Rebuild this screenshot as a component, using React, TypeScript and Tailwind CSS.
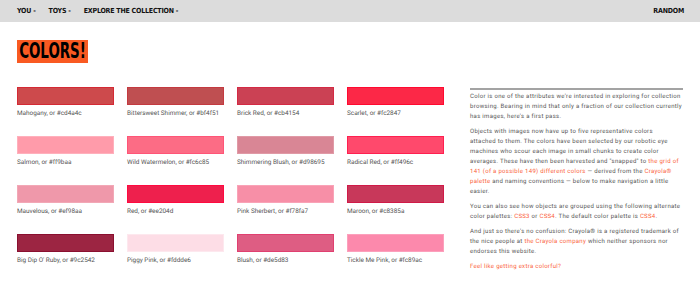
import React from 'react';

interface Swatch {
  name: string;
  hex: string;
  fill: string;
  edge: string;
}

const swatches: Swatch[] = [
  { name: 'Mahogany', hex: '#cd4a4c', fill: 'bg-[#cd4a4c]', edge: 'border-[#d42a34]' },
  { name: 'Bittersweet Shimmer', hex: '#bf4f51', fill: 'bg-[#bf4f51]', edge: 'border-[#c43a40]' },
  { name: 'Brick Red', hex: '#cb4154', fill: 'bg-[#cb4154]', edge: 'border-[#d42a44]' },
  { name: 'Scarlet', hex: '#fc2847', fill: 'bg-[#fc2847]', edge: 'border-[#ff0a30]' },
  { name: 'Salmon', hex: '#ff9baa', fill: 'bg-[#ff9baa]', edge: 'border-[#ffb0bc]' },
  { name: 'Wild Watermelon', hex: '#fc6c85', fill: 'bg-[#fc6c85]', edge: 'border-[#ff5577]' },
  { name: 'Shimmering Blush', hex: '#d98695', fill: 'bg-[#d98695]', edge: 'border-[#e09aa6]' },
  { name: 'Radical Red', hex: '#ff496c', fill: 'bg-[#ff496c]', edge: 'border-[#ff2050]' },
  { name: 'Mauvelous', hex: '#ef98aa', fill: 'bg-[#ef98aa]', edge: 'border-[#f2a8b6]' },
  { name: 'Red', hex: '#ee204d', fill: 'bg-[#ee204d]', edge: 'border-[#ff0a40]' },
  { name: 'Pink Sherbert', hex: '#f78fa7', fill: 'bg-[#f78fa7]', edge: 'border-[#f9a3b7]' },
  { name: 'Maroon', hex: '#c8385a', fill: 'bg-[#c8385a]', edge: 'border-[#d01a48]' },
  { name: "Big Dip O' Ruby", hex: '#9c2542', fill: 'bg-[#9c2542]', edge: 'border-[#8a1030]' },
  { name: 'Piggy Pink', hex: '#fddde6', fill: 'bg-[#fddde6]', edge: 'border-[#fde8ee]' },
  { name: 'Blush', hex: '#de5d83', fill: 'bg-[#de5d83]', edge: 'border-[#e04070]' },
  { name: 'Tickle Me Pink', hex: '#fc89ac', fill: 'bg-[#fc89ac]', edge: 'border-[#fca0bc]' },
];

const condensed = "font-['DejaVu_Sans_Condensed','DejaVu_Sans',sans-serif]";
const body = "font-['Roboto','Liberation_Sans',sans-serif] [text-rendering:geometricPrecision]";

function Link({ children }: { children: React.ReactNode }) {
  return <a className="text-[#fa5f3c] cursor-pointer">{children}</a>;
}

export default function App() {
  return (
    <div className="w-[700px] h-[282px] overflow-hidden bg-white">
      {/* Top nav */}
      <nav className={`h-[22px] bg-[#dcdcdc] flex items-center justify-between pl-[17px] pr-[16px] text-[7px] tracking-[-0.2px] font-bold text-[#111] ${condensed}`}>
        <div className="flex items-center gap-[13px]">
          <span>YOU -</span>
          <span>TOYS -</span>
          <span>EXPLORE THE COLLECTION -</span>
        </div>
        <span>RANDOM</span>
      </nav>

      <div className="px-[17px]">
        {/* Title */}
        <div className="mt-[18px] flex">
          <h1 className={`w-[71px] h-[23px] bg-[#f95a22] text-black text-[21px] leading-[23px] font-bold overflow-hidden ${condensed}`}>
            <span className="inline-block pl-[3px] origin-left scale-x-[0.71]">COLORS!</span>
          </h1>
        </div>

        <div className="mt-[24px] flex items-start gap-[26px]">
          {/* Swatch grid */}
          <div className="grid grid-cols-4 gap-x-[13px] gap-y-[19px] w-[427px] shrink-0">
            {swatches.map((s) => (
              <div key={s.hex}>
                <div className={`h-[18px] border ${s.fill} ${s.edge}`} />
                <div className={`mt-[4px] text-[6.4px] leading-[8px] whitespace-nowrap text-[#555] ${body}`}>
                  {s.name}, or {s.hex}
                </div>
              </div>
            ))}
          </div>

          {/* Description */}
          <div className={`w-[216px] mt-[1px] border-t-2 border-[#a3a3a3] pt-[2px] text-[6px] tracking-[0.3px] leading-[10px] text-[#555] flex flex-col gap-[5px] ${body}`}>
            <p>
              Color is one of the attributes we're interested in exploring for collection
              <br />
              browsing. Bearing in mind that only a fraction of our collection currently
              <br />
              has images, here's a first pass.
            </p>
            <p>
              Objects with images now have up to five representative colors
              <br />
              attached to them. The colors have been selected by our robotic eye
              <br />
              machines who scour each image in small chunks to create color
              <br />
              averages. These have then been harvested and "snapped" to <Link>the grid of</Link>
              <br />
              <Link>141 (of a possible 149) different colors</Link> — derived from the <Link>Crayola®</Link>
              <br />
              <Link>palette</Link> and naming conventions — below to make navigation a little
              <br />
              easier.
            </p>
            <p>
              You can also see how objects are grouped using the following alternate
              <br />
              color palettes: <Link>CSS3</Link> or <Link>CSS4</Link>. The default color palette is <Link>CSS4</Link>.
            </p>
            <p>
              And just so there's no confusion: Crayola® is a registered trademark of
              <br />
              the nice people at <Link>the Crayola company</Link> which neither sponsors nor
              <br />
              endorses this website.
            </p>
            <p>
              <Link>Feel like getting extra colorful?</Link>
            </p>
          </div>
        </div>
      </div>
    </div>
  );
}
